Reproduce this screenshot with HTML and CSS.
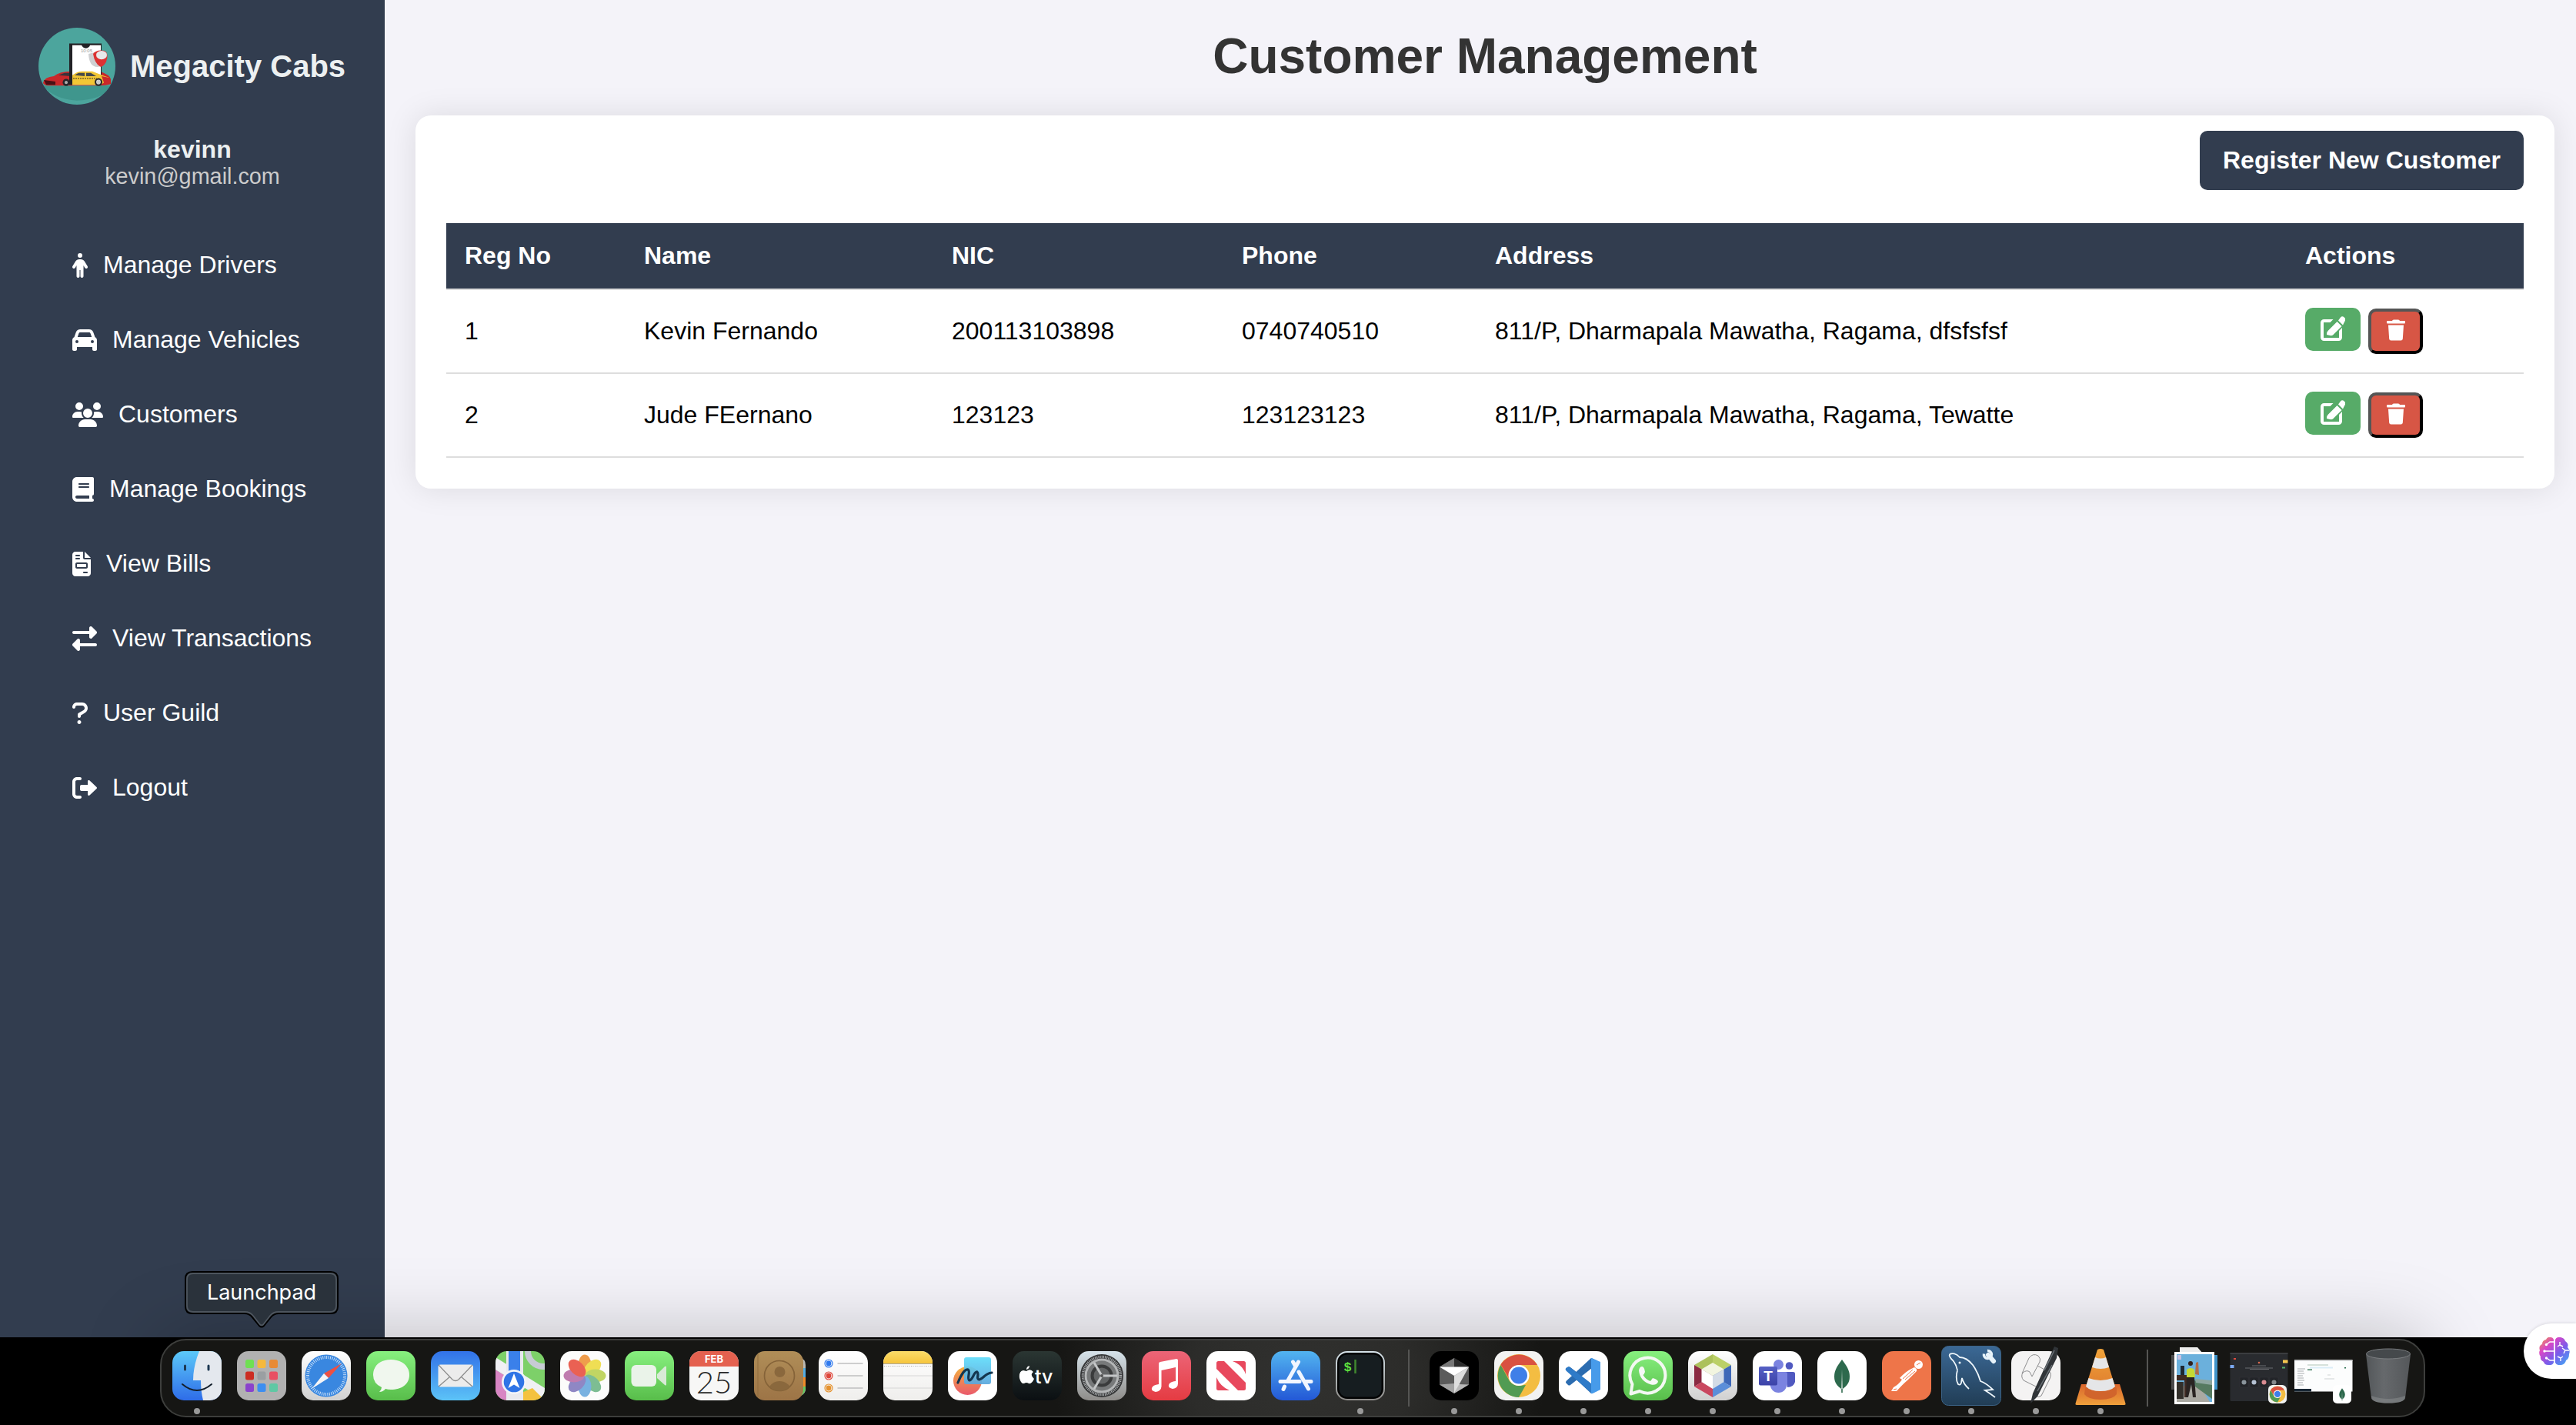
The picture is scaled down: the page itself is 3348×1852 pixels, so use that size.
FILE: index.html
```html
<!DOCTYPE html>
<html lang="en">
<head>
<meta charset="utf-8">
<title>Megacity Cabs - Customer Management</title>
<link rel="stylesheet" href="styles.css">
</head>
<body>
<svg class="defs" width="0" height="0" aria-hidden="true">
  <defs>
    <linearGradient id="g-green" x2="0" y2="1"><stop stop-color="#87f07f"/><stop offset="1" stop-color="#58bd4a"/></linearGradient>
    <linearGradient id="g-blue" x2="0" y2="1"><stop stop-color="#3272e8"/><stop offset="1" stop-color="#5cc3f7"/></linearGradient>
    <linearGradient id="g-sky" x2="0" y2="1"><stop stop-color="#5cc9f9"/><stop offset="1" stop-color="#2e6ce8"/></linearGradient>
    <linearGradient id="g-white" x2="0" y2="1"><stop stop-color="#fff"/><stop offset="1" stop-color="#d0d0d0"/></linearGradient>
    <linearGradient id="g-paper" x2="0" y2="1"><stop stop-color="#fff"/><stop offset="1" stop-color="#efeeec"/></linearGradient>
    <linearGradient id="g-steel" x2="0" y2="1"><stop stop-color="#d6e3ea"/><stop offset="1" stop-color="#8e8c89"/></linearGradient>
    <linearGradient id="g-red" x2="0" y2="1"><stop stop-color="#ec6577"/><stop offset="1" stop-color="#e53b42"/></linearGradient>
    <linearGradient id="g-store" x2="0" y2="1"><stop stop-color="#52b4f0"/><stop offset="1" stop-color="#2358d6"/></linearGradient>
    <linearGradient id="g-brown" x2="0" y2="1"><stop stop-color="#b08e58"/><stop offset="1" stop-color="#9d7446"/></linearGradient>
    <linearGradient id="g-yellow" x2="0" y2="1"><stop stop-color="#fbdc6a"/><stop offset="1" stop-color="#f6c53c"/></linearGradient>
    <linearGradient id="g-navy" x2="0" y2="1"><stop stop-color="#3b6895"/><stop offset="1" stop-color="#213d55"/></linearGradient>
    <linearGradient id="g-cone" x2="0" y2="1"><stop stop-color="#f0a33a"/><stop offset="1" stop-color="#de7a2d"/></linearGradient>
    <linearGradient id="g-base" x2="0" y2="1"><stop stop-color="#d9652c"/><stop offset="1" stop-color="#efa03b"/></linearGradient>
    <linearGradient id="g-tv" x2="0" y2="1"><stop stop-color="#2b3633"/><stop offset="1" stop-color="#0b0f12"/></linearGradient>
    <linearGradient id="g-trash" x2="1"><stop stop-color="#53575a"/><stop offset=".4" stop-color="#66696c"/><stop offset="1" stop-color="#54575a"/></linearGradient>
    <linearGradient id="g-brain" x1="0" y1="0" x2="1" y2="1"><stop stop-color="#f2a33a"/><stop offset=".3" stop-color="#d846c8"/><stop offset=".6" stop-color="#7a5cea"/><stop offset="1" stop-color="#3bb0f5"/></linearGradient>
    <linearGradient id="g-free" x2="0" y2="1"><stop stop-color="#f3b13e"/><stop offset="1" stop-color="#ea5a6c"/></linearGradient>
    <linearGradient id="g-tray" x2="0" y2="1"><stop stop-color="#5fdcfa"/><stop offset="1" stop-color="#5aa6dc"/></linearGradient>
    <linearGradient id="g-teams" x2="0" y2="1"><stop stop-color="#5560c4"/><stop offset="1" stop-color="#3c42a8"/></linearGradient>
    <clipPath id="tile"><rect width="64" height="64" rx="15"/></clipPath>
    <clipPath id="disc"><ellipse cx="50" cy="48.5" rx="50" ry="48.5"/></clipPath>
    <symbol id="chrome" viewBox="0 0 64 64">
      <rect width="64" height="64" rx="15" fill="#f2f2f1"/>
      <circle cx="32" cy="32" r="28" fill="#f3bd42"/>
      <path d="M8.500 18L20 39Q25 45 32 45L41 44 32 60A28 28 0 0 1 8.500 18z" fill="#519b53"/>
      <path d="M8.500 17.500A28 28 0 0 1 56 18H32L20 37z" fill="#d95141"/>
      <circle cx="32" cy="31.500" r="13.500" fill="#fff"/><circle cx="32" cy="31.500" r="11" fill="#3f7fe8"/>
    </symbol>
    <symbol id="mongo" viewBox="0 0 64 64">
      <rect width="64" height="64" rx="15" fill="#fff"/>
      <path d="M32 11C38 19 42 25 42 33C42 42 37 46 33 49H31C27 46 22 42 22 33C22 25 26 19 32 11z" fill="#2d694d"/>
      <path d="M32 24L33 54H31z" fill="#c9d6cf"/><path d="M31.300 49h1.400v5h-1.400z" fill="#2d694d"/>
    </symbol>
    <symbol id="edit" viewBox="0 0 32 32">
      <path d="M16.500 4H4.500A4.500 4.500 0 0 0 0 8.500V27.500A4.500 4.500 0 0 0 4.500 32H23.500A4.500 4.500 0 0 0 28 27.500V15L24 19V28H4V8H12.500z"/>
      <path d="M21.500 7L27.500 13L16 24.500Q14 26 8 24Q8 20 10 18.500zM23 5.500L26 1.500Q28-1 30.800 1.500Q33.500 4 31.500 6.500L29 11.500z"/>
    </symbol>
    <symbol id="trash" viewBox="0 0 24 28">
      <path d="M1 2H7Q7.500 .5 9 .5H15Q16.500 .5 17 2H23Q24 2 24 3V4.500Q24 5.500 23 5.500H1Q0 5.500 0 4.500V3Q0 2 1 2zM2 7.500H22L20.800 25.500Q20.500 27.500 18.500 27.500H5.500Q3.500 27.500 3.200 25.500z"/>
    </symbol>
  </defs>
</svg>

<div class="app">
  <aside class="sidebar">
    <div class="brand">
      <svg class="brand-logo" viewBox="0 0 100 97" preserveAspectRatio="none">
        <g clip-path="url(#disc)">
          <rect width="100" height="97" fill="#4ca59d"/>
          <path d="M6 73H94V78Q80 90 50 92Q20 90 6 73z" fill="#31877e" opacity=".5"/>
          <path d="M6 69Q8 62 20 61Q28 55 42 55H80Q94 60 94 65V71Q88 73 80 73H12Q6 72 6 69z" fill="#c9282a"/>
          <path d="M7 66L22 68V72H10z" fill="#4a1014"/><path d="M26 60L34 57H41V61z" fill="#39323a"/>
          <path d="M40 20H82V72H40z" fill="#222225"/>
          <path d="M44 22H56Q58 26 62 26Q66 25 67 22H81V72H44z" fill="#fff"/>
          <text x="55" y="31" class="phone-time">10:05</text>
          <path d="M65 33L73 31L80 49Q66 52 65 33z" fill="#cfd0d2"/>
          <path d="M71 33Q75 27 86 29Q92 32 88 43Q84 50 80 49Q73 45 71 33z" fill="#dc3232"/><ellipse cx="82" cy="34.500" rx="7" ry="5.500" fill="#e8e9ea"/>
          <path d="M44 60Q50 55 57 55H70Q80 59 92 63L84 70 80 72H44z" fill="#f2c735"/>
          <path d="M47 60L52 57H60V61zM62 57H68L75 61H62z" fill="#45494a"/><path d="M45 64H76" stroke="#3d3721" stroke-dasharray="2 1"/>
          <path d="M82 61L92 63 94 70 86 72z" fill="#c9282a"/>
          <circle cx="36" cy="69" r="4.500" fill="#26262a"/><circle cx="36" cy="69" r="2" fill="#aaa"/><circle cx="78" cy="68.500" r="5" fill="#26262a"/><circle cx="78" cy="68.500" r="3" fill="#ccc"/>
        </g>
      </svg>
      <span class="brand-name">Megacity Cabs</span>
    </div>
    <div class="user">
      <div class="user-name">kevinn</div>
      <div class="user-mail">kevin@gmail.com</div>
    </div>
    <nav class="nav">
      <a class="nav-item"><svg class="icon w20" viewBox="0 0 320 512"><path d="M112 48a48 48 0 1 1 96 0 48 48 0 1 1-96 0zm40 304V480c0 17.700-14.300 32-32 32s-32-14.300-32-32V256.900L59.400 304.500c-9.100 15.100-28.800 20-43.900 10.900s-20-28.800-10.900-43.900l58.300-97c17.400-28.900 48.600-46.600 82.300-46.600h29.700c33.700 0 64.900 17.700 82.300 46.600l58.300 97c9.100 15.100 4.200 34.800-10.900 43.900s-34.800 4.200-43.900-10.900L232 256.900V480c0 17.700-14.300 32-32 32s-32-14.300-32-32V352h-16z"/></svg>Manage Drivers</a>
      <a class="nav-item"><svg class="icon w32" viewBox="0 0 512 512"><path d="M135.200 117.400L109.100 192H402.900l-26.100-74.600C372.300 104.600 360.200 96 346.600 96H165.400c-13.600 0-25.700 8.600-30.200 21.400zM39.600 196.800L74.800 96.300C88.300 57.800 124.600 32 165.400 32H346.600c40.800 0 77.100 25.800 90.600 64.300l35.200 100.500c23.200 9.600 39.600 32.500 39.600 59.200V400v48c0 17.700-14.300 32-32 32H448c-17.700 0-32-14.300-32-32V400H96v48c0 17.700-14.300 32-32 32H32c-17.700 0-32-14.300-32-32V400 256c0-26.700 16.400-49.600 39.600-59.200zM128 288a32 32 0 1 0-64 0 32 32 0 1 0 64 0zm288 32a32 32 0 1 0 0-64 32 32 0 1 0 0 64z"/></svg>Manage Vehicles</a>
      <a class="nav-item"><svg class="icon w40" viewBox="0 0 640 512"><path d="M144 0a80 80 0 1 1 0 160A80 80 0 1 1 144 0zM512 0a80 80 0 1 1 0 160A80 80 0 1 1 512 0zM0 298.700C0 239.800 47.800 192 106.700 192h42.700c15.900 0 31 3.500 44.600 9.700c-1.300 7.200-1.900 14.700-1.900 22.300c0 38.200 16.800 72.500 43.300 96H21.300C9.600 320 0 310.400 0 298.700zM405.300 320c26.600-23.500 43.300-57.800 43.300-96c0-7.600-.7-15-1.900-22.300c13.600-6.300 28.700-9.700 44.600-9.700h42.700C592.200 192 640 239.800 640 298.700c0 11.800-9.600 21.300-21.300 21.300H405.300zM224 224a96 96 0 1 1 192 0 96 96 0 1 1-192 0zM128 485.300C128 411.700 187.700 352 261.300 352H378.700C452.300 352 512 411.700 512 485.300c0 14.700-11.900 26.700-26.700 26.700H154.700c-14.700 0-26.700-11.900-26.700-26.700z"/></svg>Customers</a>
      <a class="nav-item"><svg class="icon w28" viewBox="0 0 448 512"><path d="M96 0C43 0 0 43 0 96V416c0 53 43 96 96 96H384h32c17.700 0 32-14.300 32-32s-14.300-32-32-32V384c17.700 0 32-14.300 32-32V32c0-17.700-14.300-32-32-32H384 96zm0 384H352v64H96c-17.700 0-32-14.300-32-32s14.300-32 32-32zm32-240c0-8.800 7.200-16 16-16H336c8.800 0 16 7.200 16 16s-7.200 16-16 16H144c-8.800 0-16-7.200-16-16zm16 48H336c8.800 0 16 7.200 16 16s-7.200 16-16 16H144c-8.800 0-16-7.200-16-16s7.200-16 16-16z"/></svg>Manage Bookings</a>
      <a class="nav-item"><svg class="icon w24" viewBox="0 0 384 512"><path d="M64 0C28.700 0 0 28.700 0 64V448c0 35.300 28.700 64 64 64H320c35.300 0 64-28.700 64-64V160H256c-17.700 0-32-14.300-32-32V0H64zM256 0V128H384L256 0zM80 64h64c8.800 0 16 7.200 16 16s-7.200 16-16 16H80c-8.800 0-16-7.200-16-16s7.200-16 16-16zm0 64h64c8.800 0 16 7.200 16 16s-7.200 16-16 16H80c-8.800 0-16-7.200-16-16s7.200-16 16-16zm16 96H288c17.700 0 32 14.300 32 32v64c0 17.700-14.300 32-32 32H96c-17.700 0-32-14.300-32-32V256c0-17.700 14.300-32 32-32zm0 32v64H288V256H96zM240 416h64c8.800 0 16 7.200 16 16s-7.200 16-16 16H240c-8.800 0-16-7.200-16-16s7.200-16 16-16z" fill-rule="evenodd"/></svg>View Bills</a>
      <a class="nav-item"><svg class="icon w32" viewBox="0 0 512 512"><path d="M32 96l320 0V32c0-12.900 7.800-24.600 19.800-29.600s25.700-2.200 34.900 6.900l96 96c6 6 9.400 14.100 9.400 22.600s-3.400 16.600-9.400 22.600l-96 96c-9.200 9.200-22.900 11.900-34.900 6.900s-19.800-16.600-19.800-29.600V160L32 160c-17.700 0-32-14.300-32-32s14.300-32 32-32zM480 352c17.700 0 32 14.300 32 32s-14.300 32-32 32H160v64c0 12.900-7.800 24.600-19.800 29.600s-25.700 2.200-34.900-6.900l-96-96c-6-6-9.400-14.100-9.400-22.600s3.400-16.600 9.400-22.600l96-96c9.200-9.200 22.900-11.900 34.900-6.900s19.800 16.600 19.800 29.600l0 64H480z"/></svg>View Transactions</a>
      <a class="nav-item"><svg class="icon w20" viewBox="0 0 320 512"><path d="M204.300 32H96c-52.900 0-96 43.100-96 96c0 17.700 14.300 32 32 32s32-14.300 32-32c0-17.600 14.300-32 32-32h108.300C232.800 96 256 119.200 256 147.800c0 19.700-11 37.500-30.500 47.300L127.800 252.400C117.100 258.200 112 268.700 112 280v40c0 17.700 14.300 32 32 32s32-14.300 32-32V298.300L256 251.300c39.500-19.800 64-59.400 64-103.500C320 84 268.100 32 204.300 32zM144 400c-22.100 0-40 17.900-40 40s17.900 40 40 40s40-17.900 40-40S166.100 400 144 400z"/></svg>User Guild</a>
      <a class="nav-item"><svg class="icon w32" viewBox="0 0 512 512"><path d="M96 480h64c17.700 0 32-14.300 32-32s-14.300-32-32-32H96c-17.700 0-32-14.300-32-32V128c0-17.700 14.300-32 32-32h64c17.700 0 32-14.300 32-32s-14.300-32-32-32H96C43 32 0 75 0 128v256C0 437 43 480 96 480zM504.800 238.500l-144.100-136c-7-6.600-17.200-8.400-26-4.600c-8.800 3.800-14.500 12.500-14.500 22.100V192H192c-17.700 0-32 14.300-32 32v64c0 17.700 14.300 32 32 32h128.200v72c0 9.600 5.700 18.300 14.500 22.100c8.800 3.800 19 2 26-4.600l144.100-136C514.400 264.400 514.400 247.600 504.800 238.500z"/></svg>Logout</a>
    </nav>
  </aside>

  <main class="main">
    <h1 class="title">Customer Management</h1>
    <section class="card">
      <div class="toolbar"><button class="register">Register New Customer</button></div>
      <table class="table">
        <colgroup><col class="c-reg"><col class="c-name"><col class="c-nic"><col class="c-phone"><col class="c-addr"><col class="c-act"></colgroup>
        <thead><tr><th>Reg No</th><th>Name</th><th>NIC</th><th>Phone</th><th>Address</th><th>Actions</th></tr></thead>
        <tbody>
          <tr><td>1</td><td>Kevin Fernando</td><td>200113103898</td><td>0740740510</td><td>811/P, Dharmapala Mawatha, Ragama, dfsfsfsf</td>
            <td class="actions-cell"><div class="actions"><a class="btn-edit"><svg class="i-edit"><use href="#edit"/></svg></a><button class="btn-del"><svg class="i-trash"><use href="#trash"/></svg></button></div></td></tr>
          <tr><td>2</td><td>Jude FEernano</td><td>123123</td><td>123123123</td><td>811/P, Dharmapala Mawatha, Ragama, Tewatte</td>
            <td class="actions-cell"><div class="actions"><a class="btn-edit"><svg class="i-edit"><use href="#edit"/></svg></a><button class="btn-del"><svg class="i-trash"><use href="#trash"/></svg></button></div></td></tr>
        </tbody>
      </table>
    </section>
  </main>
</div>

<footer class="desk">
  <div class="dock">
    <div class="app-icon run"><svg viewBox="0 0 64 64"><g clip-path="url(#tile)"><rect width="64" height="64" fill="url(#g-sky)"/><path d="M35 0Q27 20 27 38H37Q37 52 40 64H64V0z" fill="#e4e8ee"/></g><path d="M16.500 19v5M47 19v5" stroke="#1d3852" stroke-width="3" stroke-linecap="round"/><path d="M13 43Q32 59 51 43" fill="none" stroke="#14202c" stroke-width="2" stroke-linecap="round"/></svg></div>
    <div class="app-icon"><svg viewBox="0 0 64 64"><rect width="64" height="64" rx="15" fill="#b1b1b1"/><g><rect x="11" y="11" width="11" height="11" rx="2.500" fill="#6fe052"/><rect x="26.500" y="11" width="11" height="11" rx="2.500" fill="#f5b93c"/><rect x="42" y="11" width="11" height="11" rx="2.500" fill="#e88a35"/><rect x="11" y="26.500" width="11" height="11" rx="2.500" fill="#cc2d22"/><rect x="26.500" y="26.500" width="11" height="11" rx="2.500" fill="#9a9fa2"/><rect x="42" y="26.500" width="11" height="11" rx="2.500" fill="#e84f62"/><rect x="11" y="42" width="11" height="11" rx="2.500" fill="#8a42cc"/><rect x="26.500" y="42" width="11" height="11" rx="2.500" fill="#3c8ef0"/><rect x="42" y="42" width="11" height="11" rx="2.500" fill="#5fc8a4"/></g></svg></div>
    <div class="app-icon"><svg viewBox="0 0 64 64"><rect width="64" height="64" rx="15" fill="url(#g-white)"/><circle cx="32" cy="32" r="27.500" fill="#3987e0"/><circle cx="32" cy="32" r="24" fill="none" stroke="#c6def7" stroke-width="4" stroke-dasharray="1 1.500"/><path d="M52 16L35 35 29 29z" fill="#ec5044"/><path d="M13 49L29 29 35 35z" fill="#f4f4f6"/></svg></div>
    <div class="app-icon"><svg viewBox="0 0 64 64"><rect width="64" height="64" rx="15" fill="url(#g-green)"/><path d="M32 11C46 11 56 19 56 31S46 50 32 50Q28 50 25 49Q22 53 17 53Q20 50 20 47Q9 42 9 31C9 19 18 11 32 11z" fill="#f0f7ee"/></svg></div>
    <div class="app-icon"><svg viewBox="0 0 64 64"><rect width="64" height="64" rx="15" fill="url(#g-blue)"/><rect x="9.500" y="17.500" width="45.500" height="29" rx="3" fill="#ececec"/><path d="M10 18L28 37Q32 40 36 37L54 18M10 46L25 33M54 46L39 33" fill="none" stroke="#8d8d8d" stroke-width="1.300"/></svg></div>
    <div class="app-icon"><svg viewBox="0 0 64 64"><g clip-path="url(#tile)"><rect width="64" height="64" fill="#7dd069"/><path d="M0 24L26 40V64H0z" fill="#d885c4"/><path d="M0 8L64 48V64L0 24z" fill="#f0f0f4"/><path d="M34 54L48 48 64 64H34z" fill="#f4c23f"/><circle cx="62" cy="0" r="20" fill="none" stroke="#c7cbd4" stroke-width="8"/><path d="M14 0H36V64H14z" fill="#e8e9ee"/><path d="M17 0H32V34H17z" fill="#3a80ea"/></g><circle cx="24" cy="40" r="16" fill="#f1f3f8"/><circle cx="24" cy="40" r="13.300" fill="#2f74e6"/><path d="M24 29L31.500 48 24 43.500 16.500 48z" fill="#fff"/></svg></div>
    <div class="app-icon"><svg viewBox="0 0 64 64"><rect width="64" height="64" rx="15" fill="#fcfcfb"/><g class="petals"><ellipse cx="32" cy="18" rx="8.500" ry="13.500" fill="#ee9135"/><ellipse cx="32" cy="18" rx="8.500" ry="13.500" fill="#eedb3e" transform="rotate(45 32 32)"/><ellipse cx="32" cy="18" rx="8.500" ry="13.500" fill="#b9d04f" transform="rotate(90 32 32)"/><ellipse cx="32" cy="18" rx="8.500" ry="13.500" fill="#6cb585" transform="rotate(135 32 32)"/><ellipse cx="32" cy="18" rx="8.500" ry="13.500" fill="#66a7dd" transform="rotate(180 32 32)"/><ellipse cx="32" cy="18" rx="8.500" ry="13.500" fill="#8077bd" transform="rotate(225 32 32)"/><ellipse cx="32" cy="18" rx="8.500" ry="13.500" fill="#b86ba5" transform="rotate(270 32 32)"/><ellipse cx="32" cy="18" rx="8.500" ry="13.500" fill="#e84c3c" transform="rotate(315 32 32)"/></g></svg></div>
    <div class="app-icon"><svg viewBox="0 0 64 64"><rect width="64" height="64" rx="15" fill="url(#g-green)"/><rect x="8.500" y="18" width="32.500" height="28" rx="6" fill="#eaf3e9"/><path d="M42 30L52 20Q54 18.500 54 21V43Q54 45.500 52 44L42 35z" fill="#d8ead6"/></svg></div>
    <div class="app-icon"><svg viewBox="0 0 64 64"><rect width="64" height="64" rx="15" fill="#f7f7f6"/><path d="M0 20V15A15 15 0 0 1 15 0H49A15 15 0 0 1 64 15V20z" fill="#e4614f"/><text x="32" y="15" class="cal-month">FEB</text><text x="32" y="54.500" class="cal-day">25</text></svg></div>
    <div class="app-icon"><svg viewBox="0 0 64 64"><path d="M60 9Q67 10 67 18V49Q67 55 61 58z" fill="#bbb9b4"/><path d="M60 22H67V34H60z" fill="#54aee4"/><path d="M60 34H67V46H60z" fill="#f08b2a"/><path d="M60 46H67Q67 56 60 58z" fill="#62cc62"/><rect width="64" height="64" rx="14" fill="url(#g-brown)"/><path d="M5 4V60" stroke="#8f6d3e"/><g fill="none" stroke="#856339" stroke-width="1.700"><circle cx="33" cy="32" r="19.500"/></g><circle cx="33.500" cy="27" r="7" fill="#8a683d"/><path d="M20 46Q25 39 33 39T47 46Q41 51.500 33 51.500T20 46z" fill="#8a683d"/></svg></div>
    <div class="app-icon"><svg viewBox="0 0 64 64"><rect width="64" height="64" rx="15" fill="url(#g-paper)"/><g stroke="#c0c0c0" stroke-width="1.500"><path d="M24.500 16H57.500M24.500 32H57.500M24.500 48H57.500"/></g><g stroke-width="1.200"><circle cx="13" cy="16" r="5" fill="none" stroke="#2f79ee"/><circle cx="13" cy="16" r="3.400" fill="#2f79ee"/><circle cx="13" cy="32" r="5" fill="none" stroke="#de463b"/><circle cx="13" cy="32" r="3.400" fill="#de463b"/><circle cx="13" cy="48" r="5" fill="none" stroke="#e5922e"/><circle cx="13" cy="48" r="3.400" fill="#e5922e"/></g></svg></div>
    <div class="app-icon"><svg viewBox="0 0 64 64"><rect width="64" height="64" rx="15" fill="url(#g-paper)"/><path d="M0 16V15A15 15 0 0 1 15 0H49A15 15 0 0 1 64 15V16z" fill="url(#g-yellow)"/><path d="M0 16.500H64" stroke="#aaa69b"/><path d="M1 19.500H63" stroke="#aaa" stroke-dasharray="1 1.500"/><path d="M0 32H64M0 48H64" stroke="#d6d6d6"/></svg></div>
    <div class="app-icon"><svg viewBox="0 0 64 64"><rect width="64" height="64" rx="15" fill="#fff"/><circle cx="25.500" cy="38.500" r="18.500" fill="url(#g-free)"/><rect x="21" y="8" width="35" height="35" rx="3" fill="url(#g-tray)" opacity=".92"/><path d="M13 41C17 31 22 23 26 24C30 26 24 36 28 38C32 38 34 26 38 27C41 29 36 37 41 37C46 36 48 29 57 28" fill="none" stroke="#14364f" stroke-width="3.200" stroke-linecap="round"/></svg></div>
    <div class="app-icon"><svg viewBox="0 0 64 64"><rect width="64" height="64" rx="15" fill="url(#g-tv)"/><path d="M18 24Q18 20 22 19Q22 23 18 24zM18 26Q23 22 27 27Q22 31 28 36Q25 43 21 42Q18 40 15 42Q11 43 9 35Q8 26 14 25z" fill="#fff"/><text x="29" y="42" class="tv">tv</text></svg></div>
    <div class="app-icon"><svg viewBox="0 0 64 64"><rect width="64" height="64" rx="15" fill="url(#g-steel)"/><circle cx="32" cy="32" r="28" fill="#343536"/><circle cx="32" cy="32" r="24.500" fill="none" stroke="#a3a6a8" stroke-width="3.500" stroke-dasharray="1.200 1"/><circle cx="32" cy="32" r="21" fill="#77797a" stroke="#b4b6b7" stroke-width="3"/><circle cx="32" cy="32" r="12.500" fill="#636566" stroke="#3a3b3c" stroke-width="4"/><path d="M32 32H52M32 32L22 15M32 32L22 49" stroke="#c4c6c7" stroke-width="3"/><circle cx="32" cy="32" r="2" fill="#555"/></svg></div>
    <div class="app-icon"><svg viewBox="0 0 64 64"><rect width="64" height="64" rx="15" fill="url(#g-red)"/><path d="M22 16Q22 14.500 24 14L45 10Q47 10 47 12V42Q47 48 40 49Q34 48 35 44Q36 40 44 39V21L25.500 25V46Q25 52 18 53Q12 52 13 48Q14 44 22 43z" fill="#fff"/></svg></div>
    <div class="app-icon"><svg viewBox="0 0 64 64"><rect width="64" height="64" rx="15" fill="#fff"/><g fill="#e8485d"><path d="M13 15.500Q13 13 15.500 13H23L51 41V48.500Q51 51 48.500 51H41L13 23z"/><path d="M34 13H48.500Q51 13 51 15.500V30Q47 18 34 13zM13 34Q18 46 30 51H15.500Q13 51 13 48.500z"/></g></svg></div>
    <div class="app-icon"><svg viewBox="0 0 64 64"><rect width="64" height="64" rx="15" fill="url(#g-store)"/><g stroke="#f1f6ff" stroke-width="5" stroke-linecap="round"><path d="M35.500 14L22 38M17.500 46L16 49.500M28.500 14L32 20M36 27L48.500 49M12 39.500H37M44 39.500H52"/></g></svg></div>
    <div class="app-icon run"><svg viewBox="0 0 64 64"><rect width="64" height="64" rx="15" fill="url(#g-steel)"/><rect x="2" y="2" width="60" height="60" rx="13" fill="#020303"/><rect x="4.500" y="4.500" width="55" height="55" rx="10" fill="#161d20"/><text x="10.500" y="26" class="term">$</text><path d="M25.500 11V29" stroke="#41862f" stroke-width="2.500"/></svg></div>
    <div class="dock-sep first"></div>
    <div class="app-icon run"><svg viewBox="0 0 64 64"><rect width="64" height="64" rx="15" fill="#000"/><path d="M32 9L51 20.500V43.500L32 55 13 43.500V20.500z" fill="#5b5b5b"/><path d="M32 9L13 20.500H32z" fill="#777"/><path d="M32 9V20.500H51z" fill="#2c2c2c"/><path d="M32 42L13 43.500 32 55z" fill="#a3a3a3"/><path d="M38 43L51 43.500 32 55z" fill="#b8b8b8"/><path d="M32 32V55L51 20.500z" fill="#dedede"/><path d="M13 20.500H51L32 32z" fill="#fff"/></svg></div>
    <div class="app-icon run"><svg viewBox="0 0 64 64"><use href="#chrome"/></svg></div>
    <div class="app-icon run"><svg viewBox="0 0 64 64"><rect width="64" height="64" rx="15" fill="#fff"/><path d="M42 9L49 12V52L42 55 10 25Q8 23 10 21.500L12 20.500Q13.500 20 15 21L43 43V22L15 44Q13.500 45 12 44L10 42Q8 40.500 10 38.500z" fill="#2b6cb0"/><path d="M9 22.500L13 20 43 43V55L10 26Q8 24 9 22.500z" fill="#2f7bc8"/><path d="M42 9Q43 8.500 45 10L54 14V50L45 54.500Q43 55.500 42 55z" fill="#479bea"/></svg></div>
    <div class="app-icon run"><svg viewBox="0 0 64 64"><rect width="64" height="64" rx="15" fill="url(#g-green)"/><path d="M11.500 43A23 23 0 1 1 21 52L9.500 55.500z" fill="none" stroke="#f3f8f2" stroke-width="4" stroke-linejoin="round"/><path d="M24 20Q27 20 28 27Q27 30 25.500 31Q29 37 35 39L38 35Q45 37 45 40Q42 45 36 43.500Q21 39 20 25Q21 20 24 20z" fill="#f6f8f6"/></svg></div>
    <div class="app-icon run"><svg viewBox="0 0 64 64"><rect width="64" height="64" rx="15" fill="url(#g-white)"/><path d="M32 4L56 18 32 32z" fill="#bbd067"/><path d="M32 4L8 18 32 32z" fill="#acc15c"/><path d="M8 18L32 32 8 46z" fill="#8a2a42"/><path d="M8 46L32 32V60z" fill="#c9475f"/><path d="M56 18V46L32 32z" fill="#3e68b8"/><path d="M56 46L32 60V32z" fill="#5b8ed9"/><path d="M32 15L46.500 23.500 32 32 17.500 23.500z" fill="#f2f5e0"/><path d="M17.500 23.500L32 32V49L17.500 40z" fill="#fff"/><path d="M46.500 23.500L32 32V49L46.500 40z" fill="#d3dbe6"/></svg></div>
    <div class="app-icon run"><svg viewBox="0 0 64 64"><rect width="64" height="64" rx="15" fill="#fff"/><circle cx="47.500" cy="19" r="4.800" fill="#5059c0"/><path d="M42 27H52.500Q55 27 55 29V40Q53 47 45 47z" fill="#5059c0"/><circle cx="33.500" cy="17.500" r="6.500" fill="#7b83e0"/><path d="M22 27H42.500Q45 27 45 29V42Q43 54 33.500 54T22 42z" fill="#7b83e0"/><rect x="8" y="20" width="24" height="24.500" rx="2" fill="url(#g-teams)"/><text x="20" y="38.500" class="teams">T</text></svg></div>
    <div class="app-icon run"><svg viewBox="0 0 64 64"><use href="#mongo"/></svg></div>
    <div class="app-icon run"><svg viewBox="0 0 64 64"><rect width="64" height="64" rx="15" fill="#ee7549"/><g fill="#fff"><circle cx="47.500" cy="17.500" r="5.500"/><path d="M42 21Q46 23 45 26L33 38Q27 43 19 52H12L15 47Q22 43 26 37L23 35Q31 26 42 21z"/></g><path d="M45 18L50 15M40 24L27 36M43 26L30 37M15 50L19 49" stroke="#ee7549" stroke-width="1"/></svg></div>
    <div class="app-icon run"><svg viewBox="0 0 64 64"><rect x="-6.500" y="-6.500" width="77" height="77" rx="9" fill="url(#g-navy)" stroke="#3c6386"/><path d="M14 25Q12 15 6 10Q2 5 5 3.500Q12 2 17 8Q26 8 34 18Q41 28 44 39Q52 42 60 50L50 51Q55 54 63 60M14 25Q11 36 15 43Q18 45 19 41L20 35Q22 43 29 49" fill="none" stroke="#eef6fb" stroke-width="1.800"/><circle cx="17" cy="15" r="1.500" fill="#eef6fb"/><path d="M54 5L61 13" stroke="#e8f3fa" stroke-width="6" stroke-linecap="round"/><path d="M48.500 3.500A5 5 0 1 0 53-.5" fill="none" stroke="#e8f3fa" stroke-width="3.500"/></svg></div>
    <div class="app-icon run"><svg viewBox="0 0 64 64"><rect width="64" height="64" rx="15" fill="#f4f3f3"/><path d="M14 29L23 9Q28 2 35 6Q39 10 37 14L27 33 24 27Q20 24 15 28Q12 33 16 38L34 47M34 19L51 28Q52 32 50 36L39 58Q36 61 32 58" fill="none" stroke="#8d8d8f"/><path d="M56-6L61-4 59 9 34 59 25 68 28 55z" fill="#303438"/><path d="M56-1L43 25M53 18L34 52" stroke="#6a7177" stroke-width="1.500"/></svg></div>
    <div class="app-icon run"><svg viewBox="0 0 64 64"><path d="M7 43H57L64.500 68Q65 70 63 70H1Q-1 70-.5 68z" fill="url(#g-base)"/><path d="M12 48Q14 43 32 43T53 48V56Q48 63 32 63T11 56z" fill="#d1642c"/><path d="M28-2Q32-4 36-2L51 46Q45 52 32 52T13 46z" fill="url(#g-cone)"/><path d="M25 8Q32 11 39 8L43 21Q32 25 21 21zM16.500 35Q32 41 47.500 35L51 46Q45 52 32 52T13 46z" fill="#e5e6e8"/></svg></div>
    <div class="dock-sep"></div>
    <div class="app-icon"><svg viewBox="0 0 64 64"><path d="M2 5H8V50H2z" fill="#4b4b4c"/><path d="M54 5H62V50H54z" fill="#3e92c8"/><path d="M13-5H36L43 3V10H13z" fill="#ececec"/><path d="M6 1H58V69H6z" fill="#fff"/><path d="M9 4H55V66H9z" fill="#6bb0dc"/><path d="M9 48L22 44 40 46 52 66H9z" fill="#aaa9a2"/><path d="M9 31H24V36L22 60H19V38H9z" fill="#3f2a22"/><path d="M9 40H18V62H9z" fill="#33302b"/><path d="M32 38L55 43V62L33 46z" fill="#567a60"/><path d="M33 36L55 38V44L34 41z" fill="#8ea6a0"/><path d="M14 19H19V31H14z" fill="#1d2730"/><path d="M22 24Q27 20 32 24L33 34H22z" fill="#c5d934"/><circle cx="27" cy="16" r="3" fill="#30201d"/><path d="M22 34H32L34 60H30L28 43 24 60H21z" fill="#2a2422"/><path d="M34 15L37 14 38 31 33 30z" fill="#b06c48"/><path d="M10 5H15V11H10z" fill="#c8c1e2"/></svg></div>
    <div class="app-icon"><svg viewBox="0 0 64 64"><rect x="-5.500" y="2" width="75" height="63" rx="1.500" fill="#292b2f"/><path d="M-5.500 2H69.500V4H-5.500z" fill="#3b3d40"/><path d="M-1 9h3v2h-3z" fill="#dd4b3e"/><path d="M-5.500 18h5v4h-5z" fill="#7ca9f2"/><path d="M63 11.500h6.500v4H63z" fill="#f6c750"/><path d="M62 20.500h4v2h-4z" fill="#56b06a"/><circle cx="32" cy="15" r="1.300" fill="#db6b4e"/><path d="M23 19H41M14 22H50M20 23.500H45" stroke="#7c7f83" stroke-width=".8"/><g fill="#222428" stroke="#383b40" stroke-width=".4"><path d="M7 34H18V47H7zM20 34H31V47H20zM33 34H44V47H33zM46 34H57V47H46z"/></g><circle cx="12.500" cy="40.500" r="3" fill="#8a949c"/><circle cx="25.500" cy="40.500" r="3" fill="#b5c2d4"/><circle cx="38.500" cy="40.500" r="3" fill="#da8c92"/><circle cx="51.500" cy="40.500" r="3" fill="#85888c"/><use href="#chrome" x="44" y="44" width="24" height="24"/></svg></div>
    <div class="app-icon"><svg viewBox="0 0 64 64"><rect x="-6" y="11.500" width="75.500" height="41" fill="#fcfdfd"/><path d="M-6 11.500H69.500V13H-6z" fill="#d9dadb"/><path d="M-6 49H16V52.500H-6z" fill="#172633"/><path d="M-2 23H8M-2 26H6M-2 29H7M-2 32H5M-2 35H6M-2 38H7M-2 41H5M-2 44H6" stroke="#a9adb0"/><path d="M11 18H38" stroke="#8fae9c" stroke-width=".7"/><path d="M14 20.500H44V22.500H14z" fill="#dcedf8"/><path d="M11 23.500H17V25H11z" fill="#3d795d"/><path d="M59 21h2v1.500h-2z" fill="#236a4a"/><path d="M33 36H46M37 31H41" stroke="#bbc0c2" stroke-width=".7"/><use href="#mongo" x="44" y="44" width="24" height="24"/></svg></div>
    <div class="app-icon"><svg viewBox="0 0 64 64"><path d="M3 4L10 61Q12 67.500 32 67.500T54 61L61 4z" fill="url(#g-trash)"/><path d="M10 58Q32 66 54 58L53.500 62Q50 67.500 32 67.500T10.500 62z" fill="#85888b" opacity=".6"/><ellipse cx="32" cy="3.500" rx="28.500" ry="6.500" fill="#45494c" stroke="#7b7e81"/></svg></div>
    <div class="tooltip"><svg class="tooltip-shape" viewBox="0 0 200 74"><path d="M10 1H190Q199 1 199 10V46Q199 55 190 55H122Q116 55 112 60L103 71Q100 74 97 71L88 60Q84 55 78 55H10Q1 55 1 46V10Q1 1 10 1z" fill="#2a323b" stroke="#000" stroke-width="2"/><path d="M11 3H189Q197 3 197 11V45Q197 53 189 53H122Q115 53 111 58L102 69.500Q100 71 98 69.500L89 58Q85 53 78 53H11Q3 53 3 45V11Q3 3 11 3z" fill="none" stroke="#4d555e" stroke-width="1.800"/></svg><span class="tooltip-text">Launchpad</span></div>
  </div>
</footer>

<div class="brain-tab"><svg class="brain" viewBox="0 0 40 36"><path d="M19 3V33Q17 37 12 36Q7 36 6 32Q1 30 2 25Q-1 21 1 17Q-1 11 4 9Q4 4 9 3Q11-1 15 0Q18 0 19 3zM21 3Q23-1 28 0Q33 1 34 5Q39 8 37 13Q41 17 39 22Q39 28 35 30Q34 35 29 36Q23 37 21 33z" fill="url(#g-brain)"/><g fill="none" stroke="#fff" stroke-width="1.400"><path d="M19 6H14L10 9M19 18H7M19 30H14L10 27M27 6V10L24 12M27 10L31 12M30 14L34 17H39M34 17L32 21M24 25L28 27 31 25M28 27V31"/></g><circle cx="9.500" cy="9.500" r="1.700" fill="#fff"/><circle cx="7" cy="18" r="1.700" fill="#fff"/><circle cx="9.500" cy="27" r="1.700" fill="#fff"/></svg></div>
</body>
</html>
```
FILE: styles.css
```css
* { box-sizing: border-box; }
body {
  margin: 0;
  position: relative;
  width: 3348px;
  height: 1852px;
  overflow: hidden;
  background: #000;
  font: 32px/37px "Liberation Sans", Arial, sans-serif;
  color: #000;
}
.defs { position: absolute; }
.app { display: flex; height: 1738px; background: #f4f3f9; }

/* sidebar */
.sidebar { width: 500px; flex: none; background: #323d4f; color: #fff; padding-top: 36px; }
.brand { display: flex; align-items: center; padding-left: 50px; gap: 19px; height: 100px; }
.brand-logo { width: 100px; height: 100px; }
.brand-name { font-size: 40px; line-height: 46px; font-weight: bold; color: #ecf0f1; }
.phone-time { font: 6px "Liberation Sans", Arial, sans-serif; fill: #999; }
.user { text-align: center; padding-top: 40px; }
.user-name { font-weight: bold; color: #ecf0f1; }
.user-mail { font-size: 28.8px; line-height: 33px; color: #ccc; }
.nav { display: flex; flex-direction: column; padding-top: 50px; }
.nav-item { display: flex; align-items: center; height: 97px; padding-left: 94px; gap: 20px; white-space: nowrap; }
.icon { height: 32px; fill: #fff; flex: none; }
.w20 { width: 20px; }
.w24 { width: 24px; }
.w28 { width: 28px; }
.w32 { width: 32px; }
.w40 { width: 40px; }

/* content */
.main { flex: 1; padding: 36px 28px 0 40px; }
.title { margin: 0 0 40px; font-size: 64px; line-height: 74px; text-align: center; color: #333; }
.card { height: 485px; padding: 20px 40px 40px; border-radius: 20px; background: #fff; box-shadow: 0 0 40px rgba(0, 0, 0, .1); }
.toolbar { display: flex; justify-content: flex-end; height: 120px; }
.register { width: 421px; height: 77px; border: 0; border-radius: 10px; background: #323d4f; color: #fff; font: bold 32px/37px "Liberation Sans", Arial, sans-serif; padding: 0; white-space: nowrap; }
.table { width: 2700px; border-collapse: separate; border-spacing: 0; table-layout: fixed; }
.c-reg { width: 233px; }
.c-name { width: 400px; }
.c-nic { width: 377px; }
.c-phone { width: 329px; }
.c-addr { width: 1053px; }
.c-act { width: 308px; }
th, td { padding: 0 24px; text-align: left; border-bottom: 2px solid #ddd; white-space: nowrap; }
th { height: 87px; background: #323d4f; background-clip: padding-box; color: #fff; }
td { height: 109px; }
.actions-cell { vertical-align: top; padding-top: 23px; }
.actions { display: flex; gap: 10px; }
.btn-edit { display: flex; align-items: center; justify-content: center; width: 72px; height: 56px; border-radius: 10px; background: #57ab68; padding-bottom: 2px; }
.btn-del { display: flex; align-items: center; justify-content: center; width: 71px; height: 59px; margin-top: 1px; padding: 0 0 3px; border: 4px solid; border-color: #555 #000 #000 #555; border-radius: 10px; background: #d75645; }
.i-edit { width: 32px; height: 32px; fill: #fff; }
.i-trash { width: 24px; height: 28px; fill: #fff; }

/* dock */
.desk { height: 114px; padding: 2px 0 0 208px; }
.dock {
  position: relative;
  display: flex;
  gap: 20px;
  width: 2944px;
  height: 102px;
  padding: 14px 14px 0;
  border: 2px solid #3d3e3c;
  border-radius: 34px;
  background: radial-gradient(ellipse 320px 220px at 1480px 50px, #31312f 0%, #2c2c2a 45%, #161614 100%);
  box-shadow: 0 0 100px rgba(0, 0, 0, .26);
}
.app-icon { position: relative; width: 64px; height: 64px; flex: none; }
.app-icon svg { display: block; width: 64px; height: 64px; overflow: visible; }
.app-icon.run::after { content: ""; position: absolute; left: 28px; top: 74px; width: 8px; height: 8px; border-radius: 50%; background: #999; }
.dock-sep { width: 2px; height: 74px; margin: -2px 8px 0; background: #555553; flex: none; }
.dock-sep.first { margin: -2px 6px 0 10px; }
.petals { opacity: .88; }
.cal-month { font: bold 13px Inter, sans-serif; fill: #fff; text-anchor: middle; }
.cal-day { font: 300 40px Lato, Inter, sans-serif; fill: #292929; text-anchor: middle; }
.tv { font: 500 25px Inter, sans-serif; fill: #fff; }
.term { font: bold 17px "Liberation Mono", monospace; fill: #5fe03f; }
.teams { font: bold 19px "Liberation Sans", sans-serif; fill: #fff; text-anchor: middle; }
.tooltip { position: absolute; left: 30px; top: -90px; width: 200px; height: 74px; }
.tooltip-shape { position: absolute; left: 0; top: 0; width: 200px; height: 74px; }
.tooltip-text { position: relative; display: block; width: 200px; padding-top: 10px; text-align: center; font: 27px/36px Inter, sans-serif; color: #fff; }

/* assistant tab */
.brain-tab { position: absolute; right: 0; top: 1720px; width: 68px; height: 72px; padding: 18px 0 0 20px; border-radius: 36px 0 0 36px; background: #fff; box-shadow: 0 0 4px rgba(0, 0, 0, .15); }
.brain { display: block; width: 40px; height: 36px; }
```
